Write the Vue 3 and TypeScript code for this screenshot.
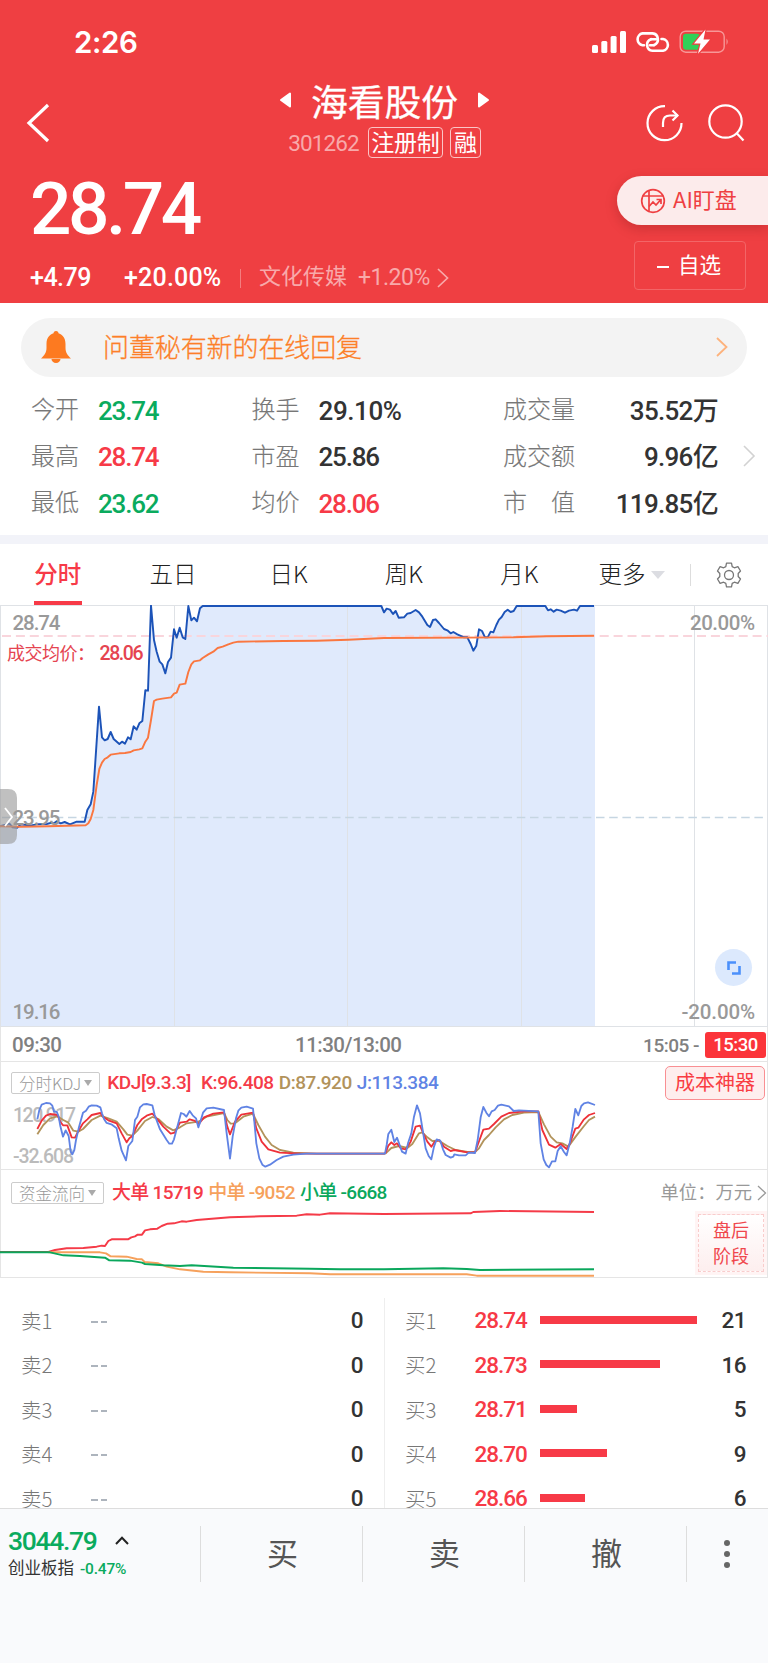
<script setup lang="ts">
interface Quote { label: string; value: string; tone?: string }
interface Level { label: string; price: string; volume: number }

const quotes: Quote[] = [
  { label: '今开', value: '23.74', tone: 'down' },
  { label: '换手', value: '29.10%' },
  { label: '成交量', value: '35.52万' },
  { label: '最高', value: '28.74', tone: 'up' },
  { label: '市盈', value: '25.86' },
  { label: '成交额', value: '9.96亿' },
  { label: '最低', value: '23.62', tone: 'down' },
  { label: '均价', value: '28.06', tone: 'up' },
  { label: '市　值', value: '119.85亿' },
]

const tabs: string[] = ['分时', '五日', '日K', '周K', '月K']

const asks: Level[] = [1, 2, 3, 4, 5].map((n) => ({ label: `卖${n}`, price: '--', volume: 0 }))
const bids: Level[] = [
  { label: '买1', price: '28.74', volume: 21 },
  { label: '买2', price: '28.73', volume: 16 },
  { label: '买3', price: '28.71', volume: 5 },
  { label: '买4', price: '28.70', volume: 9 },
  { label: '买5', price: '28.66', volume: 6 },
]
const maxVolume = Math.max(...bids.map((b) => b.volume))
const barWidth = (volume: number): string => `${(volume / maxVolume) * 157}px`

// Series points are stored in thirds of a pixel.
const price =
  '0,694 28,686 38,697 52,698 62,688 90,692 110,688 140,687 155,683 162,685 170,679 182,685 194,681 210,688 230,680 254,680 262,645 272,628 280,590 288,470 297,335 306,427 314,436 323,432 332,411 341,432 358,447 366,440 375,446 384,427 392,433 401,394 410,404 418,385 427,378 436,286 444,287 453,32 462,135 470,170 479,200 487,208 496,235 504,201 513,188 522,103 530,128 539,98 548,127 556,132 565,33 574,76 582,68 591,79 600,40 608,33 1144,33 1152,52 ' +
  '1160,41 1170,44 1179,57 1187,48 1196,68 1212,67 1222,56 1232,54 1247,45 1257,52 1267,65 1282,90 1290,96 1299,75 1307,73 1317,84 1332,102 1342,106 1352,115 1360,111 1372,118 1392,127 1402,127 1412,147 1420,167 1429,152 1437,103 1446,108 1455,127 1463,127 1472,110 1480,112 1489,90 1497,74 1505,66 1514,51 1523,44 1532,51 1541,48 1550,33 1636,33 1644,46 1652,43 1661,50 1670,44 1682,47 1695,53 1707,47 1722,44 1731,47 1740,33 1782,33'
const average =
  '0,694 62,695 145,694 257,691 265,685 272,672 280,645 290,570 298,522 306,503 314,492 323,487 332,479 358,475 375,474 392,471 401,466 418,463 427,460 436,440 444,428 453,375 462,318 470,314 487,311 513,307 522,296 530,293 539,269 556,266 565,231 574,208 582,199 600,196 608,189 625,178 640,170 653,159 668,155 685,148 700,143 715,140 850,138 950,137 1045,134 1152,129 1540,127 1640,124 1782,122'
const kdjJ =
  '112,538 118,510 125,494 138,489 150,490 157,497 162,515 170,515 176,530 181,558 189,590 197,571 206,588 212,635 217,643 223,630 228,600 236,565 249,518 258,512 266,500 275,496 290,497 301,502 306,520 312,537 320,549 336,554 350,565 356,595 365,632 378,661 385,618 397,603 405,540 412,530 420,502 430,493 440,492 457,496 464,525 480,568 500,600 508,611 516,611 522,598 532,560 543,519 551,522 559,530 569,513 578,526 588,535 595,562 601,545 609,518 620,505 640,503 672,510 680,580 690,656 698,590 708,535 715,512 724,503 740,500 759,506 763,545 769,610 778,655 787,674 796,680 810,674 830,660 850,650 880,644 920,641 1152,641 ' +
  '1155,641 1160,615 1165,582 1174,569 1183,606 1191,593 1199,615 1206,635 1217,641 1224,610 1234,580 1242,530 1251,496 1260,520 1268,570 1277,625 1286,648 1294,658 1302,620 1310,598 1321,602 1329,628 1337,645 1352,653 1360,650 1363,643 1377,646 1397,646 1406,638 1425,639 1433,600 1442,532 1450,501 1459,518 1467,529 1475,514 1484,510 1494,497 1504,494 1527,499 1541,513 1557,511 1615,514 1622,610 1631,658 1639,675 1647,682 1656,664 1666,664 1673,633 1682,619 1692,636 1700,646 1709,610 1718,560 1726,507 1735,526 1744,498 1752,490 1764,487 1785,495'
const kdjK =
  '112,567 125,542 138,527 150,522 172,525 181,545 189,556 202,556 215,592 225,593 234,575 249,550 262,538 275,525 301,519 309,530 325,541 350,550 365,580 380,607 388,595 397,588 412,555 425,538 440,527 457,521 470,535 490,560 512,581 524,578 540,548 560,545 569,538 585,543 597,551 612,532 640,521 672,517 682,560 690,583 705,545 724,524 759,518 769,565 785,605 805,628 840,638 900,641 1152,641 ' +
  '1157,638 1165,617 1174,607 1183,615 1191,610 1202,625 1217,628 1232,605 1247,560 1260,557 1270,580 1282,605 1294,620 1304,605 1317,600 1332,620 1352,633 1363,630 1402,637 1425,637 1433,615 1450,569 1467,566 1482,552 1504,530 1527,519 1572,514 1615,514 1627,570 1647,614 1666,623 1682,612 1700,627 1709,612 1726,566 1735,563 1752,538 1767,525 1785,519'
const kdjD =
  '112,583 130,555 150,535 172,529 190,540 205,548 220,572 235,575 249,567 275,540 301,527 325,535 350,545 370,568 382,584 397,587 412,572 435,543 457,531 475,537 500,560 520,571 540,562 560,550 595,545 620,530 672,519 682,540 692,551 705,550 730,530 759,521 775,555 795,590 815,615 840,630 880,638 950,641 1152,641 ' +
  '1157,640 1174,624 1197,618 1222,624 1237,612 1257,580 1267,577 1282,592 1297,603 1317,602 1342,618 1367,630 1402,636 1425,636 1437,625 1452,600 1467,585 1487,562 1512,538 1537,525 1572,518 1615,516 1632,553 1652,590 1670,607 1687,610 1705,620 1727,590 1752,558 1767,540 1785,530'
const flowBig =
  '0,936 145,936 165,930 200,925 250,924 290,920 305,917 315,918 325,903 335,898 384,898 394,892 405,889 413,884 426,884 435,871 450,868 472,866 485,858 503,851 522,850 545,844 560,845 590,840 690,832 780,829 890,827 920,823 960,824 990,820 1152,822 1412,820 1420,816 1500,813 1782,816'
const flowMid =
  '145,937 300,937 318,940 332,949 380,950 410,957 426,958 434,966 475,970 500,980 540,988 610,995 690,997 930,1000 990,1003 1400,1003 1430,1007 1782,1007'
const flowSmall =
  '0,937 150,937 190,946 240,948 315,953 328,961 390,962 426,968 435,972 490,976 540,978 575,976 700,983 930,986 1020,988 1152,988 1330,985 1400,987 1440,990 1782,988'
</script>

<template>
  <main class="page">
    <header class="head">
      <div class="status">
        <span class="clock">2:26</span>
        <svg class="signals" width="140" height="28" viewBox="0 0 140 28">
          <g fill="#fff">
            <rect x="0" y="17" width="6" height="8" rx="1.5" />
            <rect x="9.3" y="13" width="6" height="12" rx="1.5" />
            <rect x="18.6" y="8" width="6" height="17" rx="1.5" />
            <rect x="28" y="3" width="6" height="22" rx="1.5" />
          </g>
          <g fill="none" stroke="#fff" stroke-width="2.6" stroke-linecap="round">
            <path d="M52 17.2 H50.5 A6 6 0 0 1 50.5 5.4 H60.5 A6 6 0 0 1 62 17" />
            <path d="M58 17.2 H62" />
            <path d="M69.5 11 H71 A6 6 0 0 1 71 22.8 H60.5 A6 6 0 0 1 59 11.2" />
            <path d="M59 11.2 H64" />
          </g>
          <rect x="88.2" y="3.2" width="44" height="21" rx="5.5" fill="none" stroke="#f79797" stroke-width="1.4" />
          <path d="M134.500 10.500 Q137 13.500 134.500 17 Z" fill="#f79797" />
          <rect x="91" y="5.800" width="17" height="16" rx="3" fill="#30d158" />
          <path d="M113.500 1.500 L102 15.500 H108.500 L106 25.800 L118 11.500 H111.500 Z" fill="#fff" stroke="#ef3f42" stroke-width="2.4" paint-order="stroke" />
        </svg>
      </div>
      <div class="nav">
        <svg class="back" width="24" height="40" viewBox="0 0 24 40"><path d="M22 2 L3 20 L22 38" fill="none" stroke="#fff" stroke-width="3.2" /></svg>
        <div class="title">
          <div class="name">
            <svg width="13" height="17" viewBox="0 0 13 17"><path d="M11 1.500 V14.500 L2 8 Z" fill="#fff" stroke="#fff" stroke-width="2" stroke-linejoin="round" /></svg>
            <h1>海看股份</h1>
            <svg width="13" height="17" viewBox="0 0 13 17"><path d="M2 1.500 V14.500 L11 8 Z" fill="#fff" stroke="#fff" stroke-width="2" stroke-linejoin="round" /></svg>
          </div>
          <div class="code"><span class="num">301262</span><b>注册制</b><b>融</b></div>
        </div>
        <svg class="tools" width="100" height="40" viewBox="0 0 100 40" fill="none" stroke="#fff" stroke-width="2.2">
          <path d="M20 3.200 A17 17 0 1 0 36.500 20" />
          <path d="M18 24 V20 Q18 12.500 25 12.500 H33" />
          <path d="M27.500 7.500 L32.500 12.500 L27.500 17.500" />
          <circle cx="80.500" cy="18.500" r="16.200" />
          <path d="M91.500 30 L98.500 37.500" />
        </svg>
      </div>
      <div class="quote">
        <div class="figures">
          <div class="last num">28.74</div>
          <div class="delta num">
            <span class="abs">+4.79</span><span class="pct">+20.00%</span><i></i>
            <span class="sector"><em>文化传媒</em><span>+1.20%</span></span>
            <svg width="12" height="20" viewBox="0 0 12 20"><path d="M1 1 L10.500 10 L1 19" fill="none" stroke="#f8a9aa" stroke-width="1.700" /></svg>
          </div>
        </div>
        <div class="actions">
          <div class="ai">
            <svg width="26" height="26" viewBox="0 0 26 26" fill="none" stroke="#ef3f42" stroke-width="1.700">
              <circle cx="13" cy="13" r="11.300" /><path d="M9 2.500 V23.500 M2.500 8 H23.500" /><path d="M9 18.500 L13 14 L16 17 L20.500 12 M16.500 11.500 H21 V16" />
            </svg>
            <span>AI盯盘</span>
          </div>
          <div class="fav"><i></i><span>自选</span></div>
        </div>
      </div>
    </header>

    <div class="notice">
      <svg width="30" height="34" viewBox="0 0 30 34" fill="#fd7a20">
        <circle cx="15" cy="3.500" r="2.500" /><path d="M5.500 18 V14 C5.500 7 9.500 3 15 3 C20.500 3 24.500 7 24.500 14 V18 C24.500 23 27 25.500 30 28.500 H0 C3 25.500 5.500 23 5.500 18 Z" /><path d="M10.500 29 A4.500 4 0 0 0 19.500 29 Z" />
      </svg>
      <span>问董秘有新的在线回复</span>
      <svg width="12" height="20" viewBox="0 0 12 20"><path d="M1 1 L10.500 10 L1 19" fill="none" stroke="#fdb27c" stroke-width="1.800" /></svg>
    </div>

    <section class="stats">
      <dl>
        <div v-for="q in quotes" :key="q.label" class="stat">
          <dt>{{ q.label }}</dt>
          <dd class="num" :class="q.tone">{{ q.value }}</dd>
        </div>
      </dl>
      <svg width="13" height="22" viewBox="0 0 13 22"><path d="M1 1 L11 11 L1 21" fill="none" stroke="#d2d2d2" stroke-width="1.600" /></svg>
    </section>

    <nav class="tabs">
      <span v-for="(t, i) in tabs" :key="t" class="tab" :class="{ active: i === 0 }">{{ t }}</span>
      <span class="more"><span>更多</span><i></i></span>
      <svg class="gear" width="26" height="26" viewBox="0 0 26 26" fill="none" stroke="#777" stroke-width="1.300" stroke-linejoin="round">
        <path d="M10.500 1.200 H15.500 L16.200 4.600 L18.400 5.800 L21.900 4.700 L24.500 9 L22.200 11.500 V14.500 L24.500 17 L21.900 21.300 L18.400 20.200 L16.200 21.400 L15.500 24.800 H10.500 L9.800 21.400 L7.600 20.200 L4.100 21.300 L1.500 17 L3.800 14.500 V11.500 L1.500 9 L4.100 4.700 L7.600 5.800 L9.800 4.600 Z" />
        <circle cx="13" cy="13" r="4.500" />
      </svg>
    </nav>

    <section class="chart">
      <svg width="768" height="422" viewBox="0 0 768 422">
        <g transform="translate(0 -10) scale(0.33333)">
          <polygon :points="`0,1296 ${price} 1785,33 1785,1296`" fill="#e0eafc" />
        </g>
        <g stroke="#dfe2e6" stroke-width="1">
          <path d="M0 .5 H768 M0 421.500 H768 M.5 0 V422 M767.500 0 V422 M174.500 0 V422 M347.500 0 V422 M521.500 0 V422 M694.500 0 V422" />
        </g>
        <path d="M2 31 H768" stroke="#f9d5dc" stroke-width="2" stroke-dasharray="9 4.900" />
        <path d="M2 212.500 H764" stroke="#c6d6e2" stroke-width="1.300" stroke-dasharray="8.500 4.700" />
        <g class="series" transform="translate(0 -10) scale(0.33333)">
          <polyline :points="price" stroke="#1c53b8" stroke-width="5.800" />
          <polyline :points="average" stroke="#fa7740" stroke-width="5.800" />
        </g>
        <path d="M0 184 H8 Q17 184 17 193 V230 Q17 239 8 239 H0 Z" fill="#999" fill-opacity=".62" />
        <path d="M5 203 L12 212 L5 221" fill="none" stroke="#fff" stroke-width="1.800" />
        <g class="svg-num" fill="#999">
          <text x="12.500" y="24.500" textLength="48">28.74</text>
          <text x="12.500" y="219.500" textLength="48">23.95</text>
          <text x="12.500" y="414" textLength="48">19.16</text>
          <text x="690" y="24.500" textLength="65">20.00%</text>
          <text x="681.500" y="414" textLength="73.500">-20.00%</text>
        </g>
        <text class="avg-label" x="7" y="55" textLength="88" fill="#e54450">成交均价：</text>
        <text class="svg-num avg-value" x="99.500" y="55" textLength="44" fill="#e54450">28.06</text>
        <circle cx="733.500" cy="362.500" r="18.500" fill="#dce9fd" />
        <path d="M728.500 365 V357.500 H736 M732 368.500 H739.500 V361" fill="none" stroke="#4b90fb" stroke-width="2.600" />
      </svg>
    </section>

    <div class="axis num">
      <span class="open">09:30</span><span>11:30/13:00</span>
      <span class="after">15:05 - <b>15:30</b></span>
    </div>

    <section class="panel">
      <svg width="768" height="108" viewBox="0 0 768 108">
        <g class="svg-num faint" fill="#bbb">
          <text x="13" y="60" textLength="63">120.917</text>
          <text x="13" y="101" textLength="61">-32.608</text>
        </g>
        <g class="series" transform="translate(0 -122) scale(0.33333)" stroke-width="5.500">
          <polyline :points="kdjD" stroke="#b2935b" />
          <polyline :points="kdjK" stroke="#ee3038" />
          <polyline :points="kdjJ" stroke="#6083e4" />
        </g>
      </svg>
      <div class="legend num kdj">
        <span class="pick">分时KDJ<i></i></span>
        <span class="c-red">KDJ[9.3.3]</span><span class="c-red k">K:96.408</span><span class="c-tan">D:87.920</span><span class="c-blue">J:113.384</span>
        <span class="cost">成本神器</span>
      </div>
    </section>

    <section class="panel">
      <svg width="768" height="108" viewBox="0 0 768 108">
        <g class="series" transform="translate(0 -230) scale(0.33333)" stroke-width="5.800">
          <polyline :points="flowBig" stroke="#f53b48" />
          <polyline :points="flowMid" stroke="#f6a15c" />
          <polyline :points="flowSmall" stroke="#0aa75c" />
        </g>
      </svg>
      <div class="legend num flow">
        <span class="pick">资金流向<i></i></span>
        <span class="c-red">大单 15719</span><span class="c-orange">中单 -9052</span><span class="c-green">小单 -6668</span>
        <span class="unit">单位：万元<svg width="10" height="16" viewBox="0 0 10 16"><path d="M1 1 L8.500 8 L1 15" fill="none" stroke="#999" stroke-width="1.300" /></svg></span>
      </div>
      <div class="stage"><span>盘后</span><span>阶段</span></div>
    </section>

    <section class="book">
      <div class="side">
        <div v-for="a in asks" :key="a.label" class="level">
          <span class="lv">{{ a.label }}</span><span class="dash"><i></i><i></i></span><b class="num">{{ a.volume }}</b>
        </div>
      </div>
      <div class="side bid">
        <div v-for="b in bids" :key="b.label" class="level">
          <span class="lv">{{ b.label }}</span><span class="px num">{{ b.price }}</span>
          <i class="bar" :style="{ width: barWidth(b.volume) }"></i><b class="num">{{ b.volume }}</b>
        </div>
      </div>
    </section>

    <footer class="foot">
      <div class="index">
        <div class="idx-top num">3044.79<svg width="14" height="9" viewBox="0 0 14 9"><path d="M1 8 L7 1.800 L13 8" fill="none" stroke="#222" stroke-width="2" /></svg></div>
        <div class="idx-sub">创业板指<span class="num">-0.47%</span></div>
      </div>
      <span class="act">买</span><span class="act">卖</span><span class="act">撤</span>
      <span class="dots"><i></i><i></i><i></i></span>
    </footer>
  </main>
</template>

<style>
body { margin: 0; background: #fff; }
</style>

<style scoped>
.page { width: 768px; height: 1663px; overflow: hidden; display: flex; flex-direction: column; background: #fff; color: #333; font-family: "Noto Sans CJK SC", sans-serif; }
.page > * { flex: none; box-sizing: border-box; }
svg { display: block; flex: none; }
i, em { font-style: normal; }
b, h1 { font-weight: 400; margin: 0; }
.num { font-family: Roboto, "Noto Sans CJK SC", sans-serif; }
.up { color: #f73a47; }
.down { color: #0aab5e; }

.head { height: 302.5px; background: #ef3f42; color: #fff; }
.status { height: 84px; display: flex; align-items: center; justify-content: space-between; padding: 0 36px 0 74px; }
.clock { font: 600 29.500px/30px Inter, sans-serif; letter-spacing: -.4px; }
.nav { height: 78px; display: flex; justify-content: space-between; padding: 0 23px 0 26px; }
.back { margin-top: 19px; }
.title { display: flex; flex-direction: column; align-items: center; margin-left: 74px; }
.name { height: 34px; display: flex; align-items: center; gap: 19px; }
.name h1 { font-size: 36.800px; line-height: 36px; font-weight: 400; -webkit-text-stroke: .3px #fff; margin-top: -3px; }
.name svg { margin-top: -1px; }
.code { height: 40px; display: flex; align-items: center; gap: 7px; margin-top: 4px; }
.code .num { font-size: 22.500px; letter-spacing: -.9px; color: #f8a9aa; margin: 1px 2px 0 0; }
.code b { font-size: 23px; line-height: 27px; padding: 0 2.500px 2px; border: 1px solid #fbc5c6; border-radius: 4px; letter-spacing: -.3px; }
.code b + b { padding: 0 3px 2px; }
.tools { margin-top: 18.500px; }
.quote { display: flex; justify-content: space-between; }
.figures { padding-left: 30px; }
.last { font-size: 73px; line-height: 73px; font-weight: 500; letter-spacing: -3.500px; padding-top: 11px; }
.delta { display: flex; align-items: center; font-size: 25px; line-height: 30px; font-weight: 500; letter-spacing: -.5px; margin-top: 17px; }
.abs { width: 94px; }
.pct { width: 104px; white-space: nowrap; letter-spacing: .2px; }
.delta > i { width: 1px; height: 19px; margin: 0 18px 0 12px; background: #f47d7f; }
.sector { color: #f8a9aa; font-weight: 400; display: flex; gap: 11px; margin-right: 7px; font-size: 23px; }
.sector em { font-size: 22px; letter-spacing: 0; margin-top: -1px; }
.actions { display: flex; flex-direction: column; align-items: flex-end; padding-top: 14px; }
.ai { width: 151px; height: 49px; box-sizing: border-box; padding-left: 23px; display: flex; align-items: center; gap: 7px; border-radius: 25px 0 0 25px; background: #fcebeb; color: #ef3f42; font-size: 22px; box-shadow: 0 4px 12px rgba(120, 20, 20, .28); white-space: nowrap; }
.ai span { margin-top: -5px; }
.fav { width: 112px; height: 49px; box-sizing: border-box; margin: 16px 22px 0 0; border: 1px solid #f36567; border-radius: 4px; display: flex; align-items: center; justify-content: center; gap: 9px; font-size: 21.500px; }
.fav i { width: 12px; height: 2px; margin-top: 2px; background: #fff; }
.fav span { margin: -4px 2px 0 0; }

.notice { width: 726px; height: 59px; margin: 15px 0 0 21px; border-radius: 30px; background: #f3f3f3; display: flex; align-items: center; padding: 0 19px 0 20px; color: #fd7f28; font-size: 26px; }
.notice span { margin: -3px auto 0 32px; font-weight: 300; letter-spacing: -.1px; -webkit-text-stroke: .3px #fd7f28; }

.stats { height: 167.5px; display: flex; padding: 10px 12px 0 31px; border-bottom: 9.500px solid #f2f3f9; }
.stats dl { width: 687px; margin: 0; display: grid; grid-template-columns: 220.500px 251.500px 1fr; grid-auto-rows: 46.500px; }
.stats > svg { margin: 58px 0 0 auto; }
.stat { display: flex; align-items: center; white-space: nowrap; }
.stat dt { font-size: 24px; line-height: 36px; margin-top: -3px; font-weight: 300; color: #777; -webkit-text-stroke: .15px #777; }
.stat dd { margin: 2px 0 0 19px; font-size: 26px; line-height: 30px; font-weight: 500; letter-spacing: -1.200px; }
.stat:nth-child(3n) dd { margin-left: auto; letter-spacing: -.700px; }
.stat:nth-child(2) dd { letter-spacing: -.4px; }

.tabs { height: 61px; display: flex; align-items: center; padding-right: 26px; font-size: 23.500px; font-weight: 300; color: #222; }
.tab { width: 115.400px; height: 61px; line-height: 58px; text-align: center; position: relative; }
.tab.active { color: #f73a47; font-weight: 500; }
.tab.active::after { content: ""; position: absolute; left: 34px; bottom: 0; width: 48px; height: 4px; background: #f73a47; }
.more { margin-left: 21.500px; display: flex; align-items: center; gap: 6px; height: 22px; padding-right: 24.500px; border-right: 1px solid #ddd; }
.more span { margin-top: -3px; }
.more i { border: 7px solid transparent; border-top: 8px solid #dcdde2; border-bottom: 0; }
.gear { margin-left: auto; }

.chart { height: 422px; }
.series polyline { fill: none; stroke-linejoin: round; }
.svg-num { font-family: Roboto, sans-serif; font-size: 20.500px; font-weight: 500; }
.svg-num.faint { font-size: 19.500px; }
.avg-label { font-size: 18px; font-family: "Noto Sans CJK SC", sans-serif; -webkit-text-stroke: .3px #e54450; }
.svg-num.avg-value { font-size: 19.500px; font-weight: 500; }

.axis { height: 35px; display: flex; align-items: center; padding: 2px 1px 0 11px; border: 1px solid #e5e5e5; border-top: 0; font-size: 20.500px; letter-spacing: -.5px; font-weight: 500; color: #808080; }
.open { width: 283px; }
.after { display: flex; align-items: center; gap: 6px; margin-left: auto; font-size: 19px; }
.axis b { width: 61px; line-height: 26px; border-radius: 3px; text-align: center; background: #fb343a; color: #fff; font-weight: 500; font-size: 18.500px; }

.panel { height: 108px; position: relative; border: 1px solid #e5e5e5; border-top: 0; }
.panel > svg { margin-left: -1px; position: absolute; }
.legend { position: relative; display: flex; align-items: center; height: 42px; padding: 0 2px 0 10px; font-size: 19px; line-height: 24px; font-weight: 500; gap: 5px; white-space: nowrap; }
.kdj { letter-spacing: -.45px; }
.flow { letter-spacing: -.7px; padding-top: 2px; }
.pick { display: inline-flex; align-items: center; gap: 3px; box-sizing: border-box; height: 22px; padding: 0 7px; border: 1px solid #ccc; border-radius: 2px; color: #999; font: 300 16.500px/20px "Noto Sans CJK SC", sans-serif; letter-spacing: 0; margin-right: 3px; }
.kdj .pick { margin-right: 2px; }
.pick i { border: 4.500px solid transparent; border-top: 6px solid #aaa; border-bottom: 0; }
.c-red { color: #f53b48; }
.k { margin-left: 5px; }
.c-tan { color: #b2935b; }
.c-blue { color: #6083e4; }
.c-orange { color: #f6a15c; }
.c-green { color: #0aa75c; }
.cost { margin-left: auto; width: 100px; box-sizing: border-box; line-height: 32px; letter-spacing: 0; border: 1px solid #f98f93; border-radius: 5px; background: #feeeee; color: #f93d43; font-size: 20px; font-weight: 400; text-align: center; }
.unit { margin-left: auto; display: flex; align-items: center; gap: 5px; color: #999; font-size: 18.300px; font-weight: 400; letter-spacing: 0; margin-right: -2px; }
.stage { position: absolute; right: 3px; top: 44px; width: 66px; height: 58px; box-sizing: border-box; border: 1px dashed #f9cccc; outline: 3px solid #fff4f4; background: linear-gradient(#fff, #fdeeee); display: flex; flex-direction: column; align-items: center; justify-content: center; padding-bottom: 2px; color: #f0474d; font-size: 18px; line-height: 26px; }

.book { height: 230px; display: flex; overflow: hidden; padding-top: 20px; }
.side { width: 384px; box-sizing: border-box; padding: 0 21px; }
.bid { border-left: 1px solid #eee; padding: 0 22px 0 20px; }
.level { height: 44.500px; display: flex; align-items: center; }
.lv { width: 70px; font-size: 20.500px; font-weight: 300; color: #777; margin-top: -1px; }
.bid .lv { width: 69.500px; }
.dash { display: flex; gap: 3px; margin-top: 3px; }
.dash i { width: 6.500px; height: 2px; background: #adb4bd; }
.level b { margin-left: auto; font-size: 22.500px; font-weight: 500; color: #333; letter-spacing: -.5px; }
.px { width: 65.500px; font-size: 22.500px; font-weight: 500; letter-spacing: -1px; color: #f73a47; }
.bar { height: 8px; margin-bottom: 1px; background: #f73a47; }

.foot { height: 155px; border-top: 1px solid #ddd; background: #f9fafc; display: flex; padding-top: 17px; }
.index { width: 200px; height: 56px; box-sizing: border-box; padding-left: 8px; white-space: nowrap; }
.idx-top { display: flex; align-items: center; gap: 18px; height: 28px; font-size: 26.500px; font-weight: 500; color: #0aab5e; letter-spacing: -1.300px; }
.idx-sub { font-size: 16.500px; line-height: 26px; }
.idx-sub .num { color: #0aab5e; font-size: 15.500px; font-weight: 500; margin-left: 6px; letter-spacing: -.2px; }
.act { width: 162px; height: 56px; box-sizing: border-box; border-left: 1px solid #ddd; line-height: 52px; padding-left: 2px; text-align: center; font-size: 31px; color: #555; }
.dots { width: 82px; height: 56px; box-sizing: border-box; border-left: 1px solid #ddd; display: flex; flex-direction: column; align-items: center; justify-content: center; gap: 5px; padding-right: 1px; }
.dots i { width: 6px; height: 6px; border-radius: 50%; background: #666; }
</style>
